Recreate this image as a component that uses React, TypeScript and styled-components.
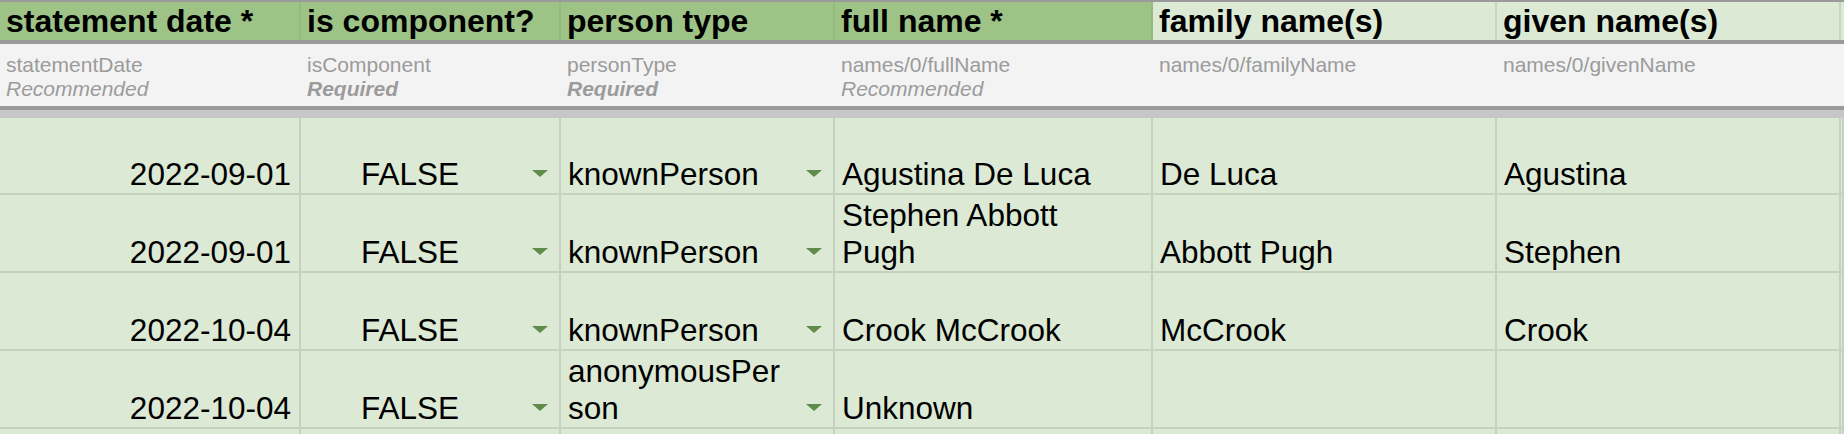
import React from "react";
import styled, { createGlobalStyle } from "styled-components";

const GlobalStyle = createGlobalStyle`
  html, body { margin: 0; padding: 0; background: #dce9d5; }
  body { font-family: "Liberation Sans", Arial, sans-serif; }
  * { box-sizing: border-box; }
`;

const COLS = "301px 260px 274px 318px 344px 344px 1fr";

const Sheet = styled.div`
  width: 1844px;
  display: flex;
  flex-direction: column;
  border-top: 2px solid #9a9a9a;
  overflow: hidden;
`;

const HeaderRow = styled.div`
  display: grid;
  grid-template-columns: ${COLS};
  height: 42px;
  border-bottom: 4px solid #9a9a9a;
`;

const HeaderCell = styled.div<{ $tone: "strong" | "light" }>`
  background: ${(p) => (p.$tone === "strong" ? "#9dc387" : "#dce9d5")};
  border-right: 2px solid
    ${(p) => (p.$tone === "strong" ? "#93bb7e" : "#c8d5c1")};
  padding: 0 6px;
  font-size: 32px;
  font-weight: 700;
  line-height: 38px;
  color: #000;
  white-space: nowrap;
  overflow: hidden;
`;

const MetaRow = styled.div`
  display: grid;
  grid-template-columns: ${COLS};
  height: 66px;
  background: #f3f3f3;
  border-bottom: 4px solid #9a9a9a;
`;

const MetaCell = styled.div`
  padding: 9px 6px 0;
  font-size: 21px;
  line-height: 24px;
  color: #9b9b9b;
  white-space: nowrap;
  overflow: hidden;
`;

const MetaNote = styled.div<{ $strong?: boolean }>`
  font-style: italic;
  font-weight: ${(p) => (p.$strong ? 700 : 400)};
`;

const FrozenBand = styled.div`
  height: 8px;
  background: #c7c7c7;
`;

const DataRow = styled.div<{ $h: number }>`
  display: grid;
  grid-template-columns: ${COLS};
  height: ${(p) => p.$h}px;
  background: #dce9d5;
  border-bottom: 2px solid #c6d1bf;
`;

const DataCell = styled.div<{ $align?: "left" | "right" }>`
  display: flex;
  align-items: flex-end;
  justify-content: ${(p) => (p.$align === "right" ? "flex-end" : "flex-start")};
  border-right: 2px solid #c6d1bf;
  padding: 0 ${(p) => (p.$align === "right" ? "8px" : "0")} 0 0;
  overflow: hidden;
`;

const Value = styled.div<{ $pad?: number; $padRight?: number; $center?: boolean }>`
  flex: 1;
  min-width: 0;
  padding-left: ${(p) => p.$pad ?? 7}px;
  padding-right: ${(p) => p.$padRight ?? 0}px;
  font-size: 31.5px;
  line-height: 37px;
  color: #000;
  text-align: ${(p) => (p.$center ? "center" : "left")};
  overflow-wrap: anywhere;
`;

const RightValue = styled.div`
  font-size: 31.5px;
  line-height: 37px;
  color: #000;
  white-space: nowrap;
`;

const ArrowSlot = styled.div<{ $gap: number }>`
  flex: none;
  width: 16px;
  height: 37px;
  margin: 0 11px 0 ${(p) => p.$gap}px;
  display: flex;
  align-items: center;
  justify-content: center;
`;

const Arrow = styled.div`
  width: 0;
  height: 0;
  border-left: 8px solid transparent;
  border-right: 8px solid transparent;
  border-top: 7px solid #5f8c4a;
  margin-top: -3px;
`;

type Row = {
  date: string;
  isComponent: string;
  personType: string;
  fullName: string;
  family: string;
  given: string;
  h: number;
};

const rows: Row[] = [
  { date: "2022-09-01", isComponent: "FALSE", personType: "knownPerson", fullName: "Agustina De Luca", family: "De Luca", given: "Agustina", h: 77 },
  { date: "2022-09-01", isComponent: "FALSE", personType: "knownPerson", fullName: "Stephen Abbott Pugh", family: "Abbott Pugh", given: "Stephen", h: 78 },
  { date: "2022-10-04", isComponent: "FALSE", personType: "knownPerson", fullName: "Crook McCrook", family: "McCrook", given: "Crook", h: 78 },
  { date: "2022-10-04", isComponent: "FALSE", personType: "anonymousPerson", fullName: "Unknown", family: "", given: "", h: 78 },
];

const headers: { label: string; tone: "strong" | "light" }[] = [
  { label: "statement date *", tone: "strong" },
  { label: "is component?", tone: "strong" },
  { label: "person type", tone: "strong" },
  { label: "full name *", tone: "strong" },
  { label: "family name(s)", tone: "light" },
  { label: "given name(s)", tone: "light" },
  { label: "", tone: "light" },
];

const meta: { path: string; note?: string; strong?: boolean }[] = [
  { path: "statementDate", note: "Recommended" },
  { path: "isComponent", note: "Required", strong: true },
  { path: "personType", note: "Required", strong: true },
  { path: "names/0/fullName", note: "Recommended" },
  { path: "names/0/familyName" },
  { path: "names/0/givenName" },
  { path: "" },
];

export default function App() {
  return (
    <>
      <GlobalStyle />
      <Sheet>
        <HeaderRow>
          {headers.map((h, i) => (
            <HeaderCell key={i} $tone={h.tone}>
              {h.label}
            </HeaderCell>
          ))}
        </HeaderRow>
        <MetaRow>
          {meta.map((m, i) => (
            <MetaCell key={i}>
              <div>{m.path}</div>
              {m.note && <MetaNote $strong={m.strong}>{m.note}</MetaNote>}
            </MetaCell>
          ))}
        </MetaRow>
        <FrozenBand />
        {rows.map((r, i) => (
          <DataRow key={i} $h={r.h}>
            <DataCell $align="right">
              <RightValue>{r.date}</RightValue>
            </DataCell>
            <DataCell>
              <Value $pad={0} $center>
                {r.isComponent}
              </Value>
              <ArrowSlot $gap={13}>
                <Arrow />
              </ArrowSlot>
            </DataCell>
            <DataCell>
              <Value>{r.personType}</Value>
              <ArrowSlot $gap={16}>
                <Arrow />
              </ArrowSlot>
            </DataCell>
            <DataCell>
              <Value $padRight={12}>{r.fullName}</Value>
            </DataCell>
            <DataCell>
              <Value>{r.family}</Value>
            </DataCell>
            <DataCell>
              <Value>{r.given}</Value>
            </DataCell>
            <DataCell />
          </DataRow>
        ))}
        <DataRow $h={40}>
          {headers.map((_, i) => (
            <DataCell key={i} />
          ))}
        </DataRow>
      </Sheet>
    </>
  );
}
